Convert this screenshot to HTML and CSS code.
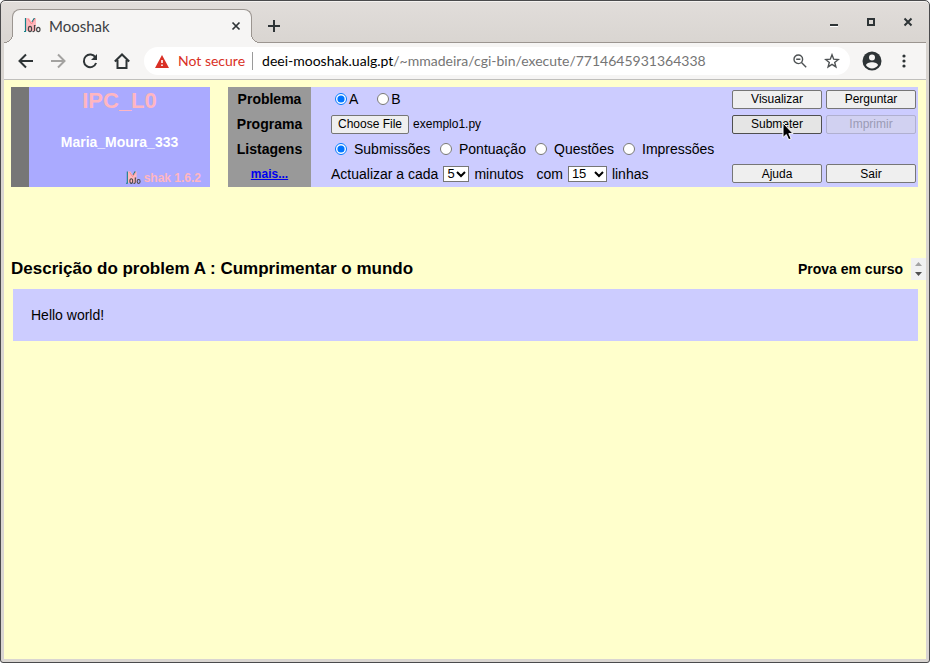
FILE: index.html
```html
<!DOCTYPE html>
<html lang="pt">
<head>
<meta charset="utf-8">
<title>Mooshak</title>
<link rel="stylesheet" href="styles.css">
</head>
<body>
<svg class="defs" aria-hidden="true">
  <symbol id="moo" viewBox="0 0 17 15">
    <path fill="#ffb9bd" d="M2 0h3l2.500 4L10 0h2v13H2z"/>
    <path fill="none" stroke="#147f86" stroke-width="1.2" d="M1.500 0v13.500H0M8 4l2.500-4"/>
    <path fill="none" stroke="#f7868c" d="M4 1l3.500 5L11 1"/>
    <g fill="none" stroke="#484848" stroke-width="1.200"><ellipse cx="6" cy="11" rx="1.600" ry="2.600"/><path d="M10.500 7v5q0 2-2 1.500M10.500 7.500h1"/><ellipse cx="14.300" cy="11.500" rx="1.700" ry="2.200"/></g>
  </symbol>
</svg>
<div class="window">
  <header class="titlebar">
    <div class="tab">
      <svg class="favicon" width="17" height="15"><use href="#moo"/></svg>
      <span class="tab-title">Mooshak</span>
      <button class="icon" aria-label="Close tab"><svg width="10" height="10" viewBox="0 0 10 10"><path d="M1.500 1.500l7 7m0-7l-7 7" stroke="#2e3436" stroke-width="1.700"/></svg></button>
    </div>
    <button class="icon new-tab" aria-label="New tab"><svg width="12" height="12" viewBox="0 0 12 12"><path d="M6 0v12M0 6h12" stroke="#2e3436" stroke-width="2"/></svg></button>
    <div class="window-controls">
      <button class="icon" aria-label="Minimize"><svg width="10" height="10" viewBox="0 0 10 10"><path d="M1 9h8" stroke="#fff" stroke-width="3"/><path d="M1 8h8" stroke="#2e3436" stroke-width="2"/></svg></button>
      <button class="icon" aria-label="Maximize"><svg width="10" height="10" viewBox="0 0 10 10"><path d="M2 2h6v6H2z" fill="none" stroke="#2e3436" stroke-width="2"/></svg></button>
      <button class="icon" aria-label="Close"><svg width="10" height="10" viewBox="0 0 10 10"><path d="M1.500 1.500l7 7m0-7l-7 7" stroke="#2e3436" stroke-width="2"/></svg></button>
    </div>
  </header>
  <nav class="toolbar">
    <div class="nav-buttons">
      <button class="icon" aria-label="Back"><svg width="16" height="16" viewBox="0 0 16 16"><path d="M15 8H2M8 1.500L1.500 8 8 14.500" fill="none" stroke="#2e3436" stroke-width="2"/></svg></button>
      <button class="icon" aria-label="Forward"><svg width="16" height="16" viewBox="0 0 16 16"><path d="M1 8h13M8 1.500L14.500 8 8 14.500" fill="none" stroke="#a3a2a0" stroke-width="2"/></svg></button>
      <button class="icon" aria-label="Reload"><svg width="16" height="16" viewBox="0 0 16 16"><path d="M13.500 4.500A6.300 6.300 0 1 0 14.100 10" fill="none" stroke="#2e3436" stroke-width="2"/><path d="M15 1v6H9z" fill="#2e3436"/></svg></button>
      <button class="icon" aria-label="Home"><svg width="16" height="16" viewBox="0 0 16 16"><path d="M.800 8.500L8 1.500l7.200 7M3.500 7v8h9V7" fill="none" stroke="#2e3436" stroke-width="2"/></svg></button>
    </div>
    <div class="address">
      <svg width="14" height="13" viewBox="0 0 14 13"><path d="M7 0l7 13H0z" fill="#d93025"/><path d="M7 5v3M7 9.500V11" stroke="#fff" stroke-width="1.600"/></svg>
      <span class="not-secure">Not secure</span>
      <span class="url">deei-mooshak.ualg.pt<span class="path">/~mmadeira/cgi-bin/execute/7714645931364338</span></span>
      <button class="icon" aria-label="Zoom"><svg width="14" height="14" viewBox="0 0 14 14"><g fill="none" stroke="#4d5153" stroke-width="1.400"><circle cx="5.300" cy="5.300" r="4.300"/><path d="M8.500 8.500l4.700 4.700M3.200 5.300h4.200"/></g></svg></button>
      <button class="icon star" aria-label="Bookmark"><svg width="16" height="16" viewBox="0 0 16 16"><path d="M8 1.800l1.700 4.400 4.600.300-3.600 2.900 1.200 4.500L8 11.400l-3.900 2.500 1.200-4.500L1.700 6.500l4.600-.300z" fill="none" stroke="#4d5153" stroke-width="1.400"/></svg></button>
    </div>
    <button class="icon" aria-label="Profile"><svg width="20" height="20" viewBox="0 0 20 20"><circle cx="10" cy="10" r="9.500" fill="#2e3436"/><circle cx="10" cy="6.500" r="3" fill="#f6f5f4"/><path d="M4 14.200c.500-4 11.500-4 12 0a7.200 7.200 0 0 1-12 0z" fill="#f6f5f4"/></svg></button>
    <button class="icon menu" aria-label="Menu"><svg width="4" height="14" viewBox="0 0 4 14"><g fill="#2e3436"><circle cx="2" cy="2" r="1.600"/><circle cx="2" cy="7" r="1.600"/><circle cx="2" cy="12" r="1.600"/></g></svg></button>
  </nav>
  <main class="page">
    <form class="top">
      <section class="identity">
        <h1>IPC_L0</h1>
        <p class="team">Maria_Moura_333</p>
        <p class="version"><svg width="15" height="14"><use href="#moo"/></svg>shak 1.6.2</p>
      </section>
      <section class="controls">
        <div class="names rows">
          <span>Problema</span><span>Programa</span><span>Listagens</span><a href="#">mais...</a>
        </div>
        <div class="fields rows">
          <div class="problems">
            <label><input type="radio" name="problem" checked>A</label>
            <label><input type="radio" name="problem">B</label>
          </div>
          <div class="program">
            <input type="file" id="program"><label for="program" class="btn file">Choose File</label><span>exemplo1.py</span>
          </div>
          <div class="listings">
            <label><input type="radio" name="list" checked>Submissões</label>
            <label><input type="radio" name="list">Pontuação</label>
            <label><input type="radio" name="list">Questões</label>
            <label><input type="radio" name="list">Impressões</label>
          </div>
          <div class="refresh">
            <label for="time">Actualizar a cada</label>
            <select id="time"><option>5</option></select>
            <span>minutos</span>
            <label for="lines" class="with">com</label>
            <select id="lines" class="lines"><option>15</option></select>
            <span>linhas</span>
          </div>
        </div>
        <div class="actions">
          <button type="button" class="btn">Visualizar</button>
          <button type="button" class="btn">Perguntar</button>
          <button type="button" class="btn hover">Submeter<svg class="pointer" width="12" height="19" viewBox="0 0 12 19"><path d="M1 1v14.500l3.300-3 2.400 5.300 2.500-1.200-2.400-5H11z" fill="#000" stroke="#fff"/></svg></button>
          <button type="button" class="btn" disabled>Imprimir</button>
          <button type="button" class="btn last">Ajuda</button>
          <button type="button" class="btn last">Sair</button>
        </div>
      </section>
    </form>
    <div class="status">
      <h2>Descrição do problem A : Cumprimentar o mundo</h2>
      <strong>Prova em curso</strong>
      <div class="scroll"><svg width="15" height="22" viewBox="0 0 15 22"><path d="M4 8l3.500-4L11 8z" fill="#a3a3a3"/><path d="M4 14l3.500 4 3.500-4z" fill="#505050"/></svg></div>
    </div>
    <article class="description">Hello world!</article>
  </main>
</div>
</body>
</html>
```
FILE: styles.css
```css
* { box-sizing: border-box; }
body {
  margin: 0;
  background: #fff;
  font: 14px/16px "Liberation Sans", Arial, sans-serif;
  color: #000;
}
h1, h2, p { margin: 0; }
.defs { position: absolute; width: 0; height: 0; }
svg { display: block; flex: none; }

.window {
  display: flex;
  flex-direction: column;
  min-height: 100vh;
  border: 1px solid #4a4a4c;
  border-radius: 5px 5px 3px 3px;
  box-shadow: inset 0 1px #f4f2f0;
  background: linear-gradient(#e1ddda, #d9d5d1 42px);
  padding: 0 3px 3px;
}
.icon {
  display: flex;
  padding: 0;
  border: 0;
  background: none;
}

.titlebar {
  display: flex;
  align-items: center;
  height: 42px;
  padding: 8px 13px 0 8px;
  border-bottom: 1px solid #9b9590;
}
.tab {
  position: relative;
  display: flex;
  align-items: center;
  gap: 8px;
  width: 240px;
  height: 34px;
  margin-bottom: -1px;
  padding: 0 10px 2px 11px;
  border: 1px solid #9b9590;
  border-bottom: 0;
  border-radius: 8px 8px 0 0;
  background: #f6f5f4;
}
/* Outward curves where the tab meets the toolbar */
.tab::before, .tab::after {
  content: "";
  position: absolute;
  bottom: 0;
  width: 9px;
  height: 9px;
}
.tab::before {
  left: -9px;
  background: radial-gradient(circle at 0 0, #dad6d2 8px, #9b9590 8px 9px, #f6f5f4 9px);
}
.tab::after {
  right: -9px;
  background: radial-gradient(circle at 100% 0, #dad6d2 8px, #9b9590 8px 9px, #f6f5f4 9px);
}
.tab-title {
  flex: 1;
  font: 15px/20px Lato, sans-serif;
  color: #3c4043;
}
.new-tab { margin-left: 16px; }
.window-controls {
  display: flex;
  gap: 27px;
  margin-left: auto;
  padding-bottom: 8px;
}

.toolbar {
  display: flex;
  align-items: center;
  gap: 12px;
  height: 37px;
  padding: 0 16px 0 14px;
  border-bottom: 1px solid #c0bfbc;
  background: #f6f5f4;
}
.nav-buttons { display: flex; gap: 16px; padding-right: 2px; }
.address {
  flex: 1;
  display: flex;
  align-items: center;
  height: 28px;
  padding: 0 10px 0 11px;
  border-radius: 14px;
  background: #fff;
  font: 14px/18px Lato, sans-serif;
  white-space: nowrap;
}
.not-secure {
  margin: 0 9px;
  padding-right: 7px;
  border-right: 1px solid #9a9a9a;
  color: #d93025;
}
.url { flex: 1; }
.path { color: #757575; }
.star { margin-left: 17px; }
.menu { margin-left: 8px; margin-right: 4px; }

.page {
  flex: 1;
  padding-top: 7px;
  background: #ffffcc;
}
.top {
  display: flex;
  gap: 18px;
  padding: 0 8px 0 7px;
}
.identity {
  display: flex;
  flex-direction: column;
  justify-content: space-between;
  width: 199px;
  padding: 1px 9px 1px 0;
  border-left: 18px solid #777;
  background: #aaaaff;
  text-align: center;
  font-weight: bold;
}
.identity h1 {
  padding-left: 9px;
  font-size: 22px;
  line-height: 26px;
  color: #ffb6c1;
}
.team { padding-left: 9px; color: #fff; }
.version {
  display: flex;
  align-items: center;
  justify-content: flex-end;
  gap: 3px;
  font-size: 12px;
  color: #ffb6c1;
}
.controls {
  flex: 1;
  display: flex;
  background: #ccccff;
}
.rows {
  display: grid;
  grid-template-rows: 24px 26px 24px 26px;
  align-items: center;
}
.names {
  width: 83px;
  background: #999;
  text-align: center;
  font-weight: bold;
}
.names a { font-size: 12px; color: #0000ee; }
.fields { flex: 1; padding-left: 20px; }
.fields > div { display: flex; align-items: center; }
.problems label, .listings label { display: flex; align-items: center; }
input[type="radio"] { width: 12px; height: 12px; margin: 0 2px 0 4px; }
.problems { gap: 15px; }
.fields .listings {
  display: grid;
  grid-template-columns: 105px 95px 88px auto;
  justify-content: start;
}
.listings input[type="radio"] { margin-right: 7px; }
.program { position: relative; gap: 4px; font-size: 12px; }
.program input { position: absolute; width: 1px; height: 1px; opacity: 0; }
.refresh { gap: 5px; }
.with { margin-left: 8px; }
select {
  appearance: none;
  width: 26px;
  height: 16px;
  padding: 0 0 0 3px;
  border: 1px solid #767676;
  border-radius: 0;
  background: #fff url("data:image/svg+xml,%3Csvg xmlns='http://www.w3.org/2000/svg' width='10' height='7'%3E%3Cpath d='M1 1l4 4 4-4' fill='none' stroke='black' stroke-width='2'/%3E%3C/svg%3E") no-repeat right 2px center;
  font: 13px/14px "Liberation Sans", Arial, sans-serif;
  color: #000;
}
.lines { width: 39px; }
.btn {
  position: relative;
  height: 19px;
  padding: 0 6px;
  border: 1px solid #767676;
  border-radius: 2px;
  background: #efefef;
  font: 12px/16px "Liberation Sans", Arial, sans-serif;
  color: #000;
}
.hover { border-color: #4f4f4f; background: #e5e5e5; }
.btn:disabled {
  border-color: #b0b0d0;
  background: #d1d1f1;
  color: #9b9bb5;
}
.pointer { position: absolute; left: 49px; top: 6px; }
.actions {
  display: grid;
  grid-template-columns: 90px 90px;
  grid-template-rows: 24px 26px 50px;
  column-gap: 4px;
  align-items: center;
  padding-right: 2px;
}
.last { align-self: end; margin-bottom: 4px; }

.status {
  display: flex;
  align-items: center;
  justify-content: space-between;
  margin-top: 71px;
  padding-left: 7px;
}
.status h2 { flex: 1; font-size: 17px; line-height: 22px; }
.scroll { margin-left: 8px; background: #f1f1f1; }
.description {
  margin: 9px 8px 0 9px;
  padding: 18px;
  background: #ccccff;
}
```
